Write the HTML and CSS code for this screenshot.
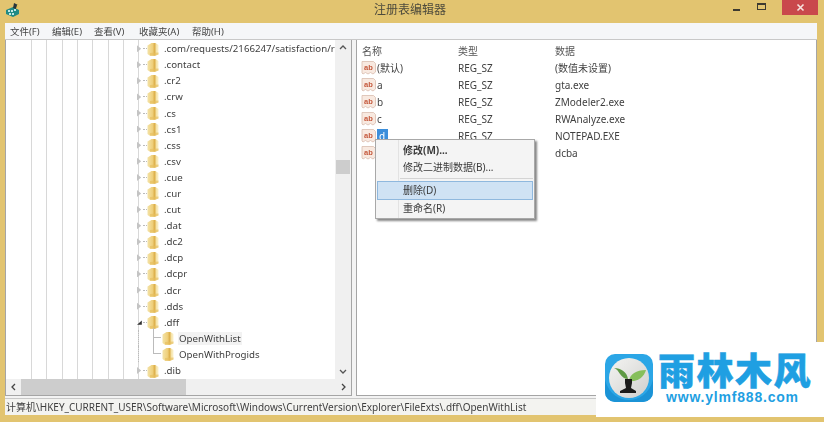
FILE: index.html
```html
<!DOCTYPE html>
<html lang="zh">
<head>
<meta charset="utf-8">
<title>注册表编辑器</title>
<link rel="stylesheet" href="styles.css">
</head>
<body>
<svg class="defs" width="0" height="0" aria-hidden="true">
  <defs>
    <linearGradient id="fold" x1="0" y1="0" x2="1" y2="0">
      <stop offset="0" stop-color="#f3e2a6"/>
      <stop offset=".45" stop-color="#efd07c"/>
      <stop offset=".66" stop-color="#dcae48"/>
      <stop offset=".8" stop-color="#f5e3a8"/>
      <stop offset="1" stop-color="#faf1d0"/>
    </linearGradient>
    <symbol id="folder" viewBox="0 0 12 14">
      <path d="M.5 3.500 4.500 1h4L11.500 3v9.500L8 13.700H3L.5 12z" fill="url(#fold)"/>
      <path d="M3 13.700h5l3.500-1.200V10.500L3 11z" fill="#e6bf5e" opacity=".65"/>
    </symbol>
    <symbol id="sz" viewBox="0 0 15 15">
      <path d="M1 1.500h11.500l2 2V12l-2.500 2-2.500-1.500-2.500 1.500-2.500-1.500L2 14l-1-1z" fill="#f8e9e0" stroke="#d9bcae" stroke-width=".8"/>
      <text x="7.500" y="9.500" text-anchor="middle" class="ab">ab</text>
    </symbol>
  </defs>
</svg>
<div class="window">
  <header class="titlebar">
    <svg class="appicon" width="16" height="16" viewBox="0 0 16 16">
      <path d="M1 8 8 5l6 3v4l-6 3-7-3z" fill="#1f8a86"/>
      <path d="M3 8h2v2H3zm3 0h2v2H6zm3-1h2v2H9zM4 11h2v2H4zm3 0h2v2H7z" fill="#bfe7e4"/>
      <path d="M9 1l4 2-2 4-3-1z" fill="#26343a"/>
      <path d="M12 3l2-1-1 4-2 1z" fill="#e3c25a"/>
    </svg>
    <div class="title">注册表编辑器</div>
    <div class="controls">
      <span class="min"></span>
      <span class="max"></span>
      <span class="close"><svg width="9" height="9" viewBox="0 0 9 9"><path d="M1.500 1.500l6 6M7.500 1.500l-6 6" stroke="#f6e4e0" stroke-width="1.600" fill="none"/></svg></span>
    </div>
  </header>
  <nav class="menubar">
    <span>文件(F)</span><span>编辑(E)</span><span>查看(V)</span><span>收藏夹(A)</span><span>帮助(H)</span>
  </nav>
  <main class="panes">
    <section class="left">
      <div class="treewrap">
        <div class="tree">
          <div class="row"><i class="tw"></i><i class="dash"></i><svg class="fd"><use href="#folder"/></svg><span>.com/requests/2166247/satisfaction/r</span></div>
          <div class="row"><i class="tw"></i><i class="dash"></i><svg class="fd"><use href="#folder"/></svg><span>.contact</span></div>
          <div class="row"><i class="tw"></i><i class="dash"></i><svg class="fd"><use href="#folder"/></svg><span>.cr2</span></div>
          <div class="row"><i class="tw"></i><i class="dash"></i><svg class="fd"><use href="#folder"/></svg><span>.crw</span></div>
          <div class="row"><i class="tw"></i><i class="dash"></i><svg class="fd"><use href="#folder"/></svg><span>.cs</span></div>
          <div class="row"><i class="tw"></i><i class="dash"></i><svg class="fd"><use href="#folder"/></svg><span>.cs1</span></div>
          <div class="row"><i class="tw"></i><i class="dash"></i><svg class="fd"><use href="#folder"/></svg><span>.css</span></div>
          <div class="row"><i class="tw"></i><i class="dash"></i><svg class="fd"><use href="#folder"/></svg><span>.csv</span></div>
          <div class="row"><i class="tw"></i><i class="dash"></i><svg class="fd"><use href="#folder"/></svg><span>.cue</span></div>
          <div class="row"><i class="tw"></i><i class="dash"></i><svg class="fd"><use href="#folder"/></svg><span>.cur</span></div>
          <div class="row"><i class="tw"></i><i class="dash"></i><svg class="fd"><use href="#folder"/></svg><span>.cut</span></div>
          <div class="row"><i class="tw"></i><i class="dash"></i><svg class="fd"><use href="#folder"/></svg><span>.dat</span></div>
          <div class="row"><i class="tw"></i><i class="dash"></i><svg class="fd"><use href="#folder"/></svg><span>.dc2</span></div>
          <div class="row"><i class="tw"></i><i class="dash"></i><svg class="fd"><use href="#folder"/></svg><span>.dcp</span></div>
          <div class="row"><i class="tw"></i><i class="dash"></i><svg class="fd"><use href="#folder"/></svg><span>.dcpr</span></div>
          <div class="row"><i class="tw"></i><i class="dash"></i><svg class="fd"><use href="#folder"/></svg><span>.dcr</span></div>
          <div class="row"><i class="tw"></i><i class="dash"></i><svg class="fd"><use href="#folder"/></svg><span>.dds</span></div>
          <div class="row"><i class="tw open"></i><i class="dash"></i><svg class="fd"><use href="#folder"/></svg><span>.dff</span></div>
          <div class="row child"><i class="elbow first"></i><svg class="fd"><use href="#folder"/></svg><span class="sel">OpenWithList</span></div>
          <div class="row child"><i class="elbow"></i><svg class="fd"><use href="#folder"/></svg><span>OpenWithProgids</span></div>
          <div class="row"><i class="tw"></i><i class="dash"></i><svg class="fd"><use href="#folder"/></svg><span>.dib</span></div>
        </div>
        <div class="vscroll">
          <svg class="arrow" width="16" height="16" viewBox="0 0 16 16"><path d="M5 9l3-3 3 3" fill="none" stroke="#555" stroke-width="1.300"/></svg>
          <div class="vtrack"><div class="vthumb"></div></div>
          <svg class="arrow" width="16" height="16" viewBox="0 0 16 16"><path d="M5 7l3 3 3-3" fill="none" stroke="#555" stroke-width="1.300"/></svg>
        </div>
      </div>
      <div class="hscroll">
        <svg class="arrow" width="15" height="16" viewBox="0 0 15 16"><path d="M9 5L6 8l3 3" fill="none" stroke="#444" stroke-width="1.300"/></svg>
        <div class="htrack"><div class="hthumb"></div></div>
        <svg class="arrow" width="15" height="16" viewBox="0 0 15 16"><path d="M6 5l3 3-3 3" fill="none" stroke="#444" stroke-width="1.300"/></svg>
      </div>
    </section>
    <section class="right">
      <div class="headrow"><span class="c1">名称</span><span class="c2">类型</span><span class="c3">数据</span></div>
      <div class="vrow"><span class="c1"><svg class="sz"><use href="#sz"/></svg>(默认)</span><span class="c2">REG_SZ</span><span class="c3">(数值未设置)</span></div>
      <div class="vrow"><span class="c1"><svg class="sz"><use href="#sz"/></svg>a</span><span class="c2">REG_SZ</span><span class="c3">gta.exe</span></div>
      <div class="vrow"><span class="c1"><svg class="sz"><use href="#sz"/></svg>b</span><span class="c2">REG_SZ</span><span class="c3">ZModeler2.exe</span></div>
      <div class="vrow"><span class="c1"><svg class="sz"><use href="#sz"/></svg>c</span><span class="c2">REG_SZ</span><span class="c3">RWAnalyze.exe</span></div>
      <div class="vrow"><span class="c1"><svg class="sz"><use href="#sz"/></svg><b class="picked">d</b></span><span class="c2">REG_SZ</span><span class="c3">NOTEPAD.EXE</span></div>
      <div class="vrow"><span class="c1"><svg class="sz"><use href="#sz"/></svg>e</span><span class="c2">REG_SZ</span><span class="c3">dcba</span></div>
    </section>
  </main>
  <footer class="status">计算机\HKEY_CURRENT_USER\Software\Microsoft\Windows\CurrentVersion\Explorer\FileExts\.dff\OpenWithList</footer>
</div>
<div class="menu">
  <div class="item strong">修改(M)...</div>
  <div class="item">修改二进制数据(B)...</div>
  <div class="sep"></div>
  <div class="item hover">删除(D)</div>
  <div class="item">重命名(R)</div>
</div>
<div class="logo">
  <svg class="logomark" width="48" height="48" viewBox="0 0 48 48">
    <defs>
      <linearGradient id="disc" x1="0" y1="0" x2="1" y2="1">
        <stop offset="0" stop-color="#f4f4f2"/>
        <stop offset="1" stop-color="#cfcfcd"/>
      </linearGradient>
    </defs>
    <rect width="48" height="48" rx="10" fill="#2ba6e6"/>
    <path d="M0 26c4 14 14 20 24 20s20-6 24-20v12a10 10 0 0 1-10 10H10A10 10 0 0 1 0 38z" fill="#1b93d6"/>
    <circle cx="24" cy="24" r="20" fill="url(#disc)"/>
    <path d="M23 25C22 18 16 14 9 14c3 1 4 3 6 6 2 3 5 5 8 5z" fill="#5f9a45"/>
    <path d="M24 27c1-7 7-11 17-11-2 7-8 12-17 11z" fill="#86bf5b"/>
    <path d="M20 25h7v4l-1 5 5 3v2H15v-2l6-3-1-5z" fill="#1b1b1a"/>
  </svg>
  <div class="brand">
    <div class="cn">雨林木风</div>
    <div class="url">www.ylmf888.com</div>
  </div>
</div>
</body>
</html>
```

FILE: styles.css
```css
* { box-sizing: border-box; }
html, body { margin: 0; height: 100%; overflow: hidden; }
body { width: 824px; height: 422px; background: #d9bc6c; font-family: "Noto Sans", "Noto Sans CJK SC", sans-serif; color: #333; position: relative; }
.defs { display: block; height: 0; }
.ab { font: bold 7.5px "Liberation Sans", sans-serif; fill: #c4583c; }
.window { height: 422px; display: flex; flex-direction: column; background: #e2c470; padding: 0 7px 7px 5px; filter: blur(.45px); }
.titlebar { height: 23px; flex: none; display: flex; align-items: center; position: relative; margin: 0 -7px 0 -5px; padding-left: 5px; }
.appicon { flex: none; margin-top: -3px; }
.title { position: absolute; left: 0; right: 4px; top: 1px; text-align: center; font-size: 12px; line-height: 18px; color: #4d4a3c; }
.controls { margin-left: auto; display: flex; align-items: flex-start; align-self: flex-start; margin-right: 6px; }
.min { width: 7px; height: 2px; background: #3d3a30; margin: 9px 17px 0 0; }
.max { width: 9px; height: 7px; border: 1px solid #3d3a30; border-top-width: 2px; margin: 3px 16px 0 0; }
.close { width: 36px; height: 15px; background: #c9484c; display: flex; align-items: center; justify-content: center; }
.menubar { height: 16px; flex: none; background: #f5f6f8; display: flex; align-items: center; font-size: 9.5px; color: #444; padding-left: 5px; gap: 11px; }
.menubar span { width: 31px; white-space: nowrap; }
.menubar span:nth-child(3) { width: 34px; }
.menubar span:nth-child(4) { width: 42px; }
.panes { flex: 1; min-height: 0; display: flex; gap: 4px; background: #f3f3f3; padding-bottom: 2px; border-top: 1px solid #c8c8c8; }
.left { width: 347px; flex: none; border: 1px solid #a5a5a5; border-top: 0; background: #fff; display: flex; flex-direction: column; }
.treewrap { flex: 1; min-height: 0; display: flex; }
.tree { flex: 1; min-width: 0; overflow: hidden; padding: .6px 0 0 131px; white-space: nowrap; font-size: 9.7px; color: #3f3f3f;
  background-image: repeating-linear-gradient(90deg, #d8d8d8 0 1px, transparent 1px 15.3px); background-position: 25px 0; background-size: 108px 100%; background-repeat: no-repeat; }
.row { height: 16.1px; display: flex; align-items: center; }
.tw { width: 6px; height: 7px; flex: none; background: #c4c4c4; clip-path: polygon(0 0, 70% 50%, 0 100%); }
.tw.open { background: #333; clip-path: polygon(80% 25%, 80% 85%, 0 85%); }
.dash { width: 4px; height: 0; border-top: 1px dotted #bbb; flex: none; }
.fd { width: 12px; height: 14px; flex: none; margin-right: 5px; }
.row.child { margin-left: 1px; padding-left: 23px; position: relative; border-left: 1px dotted #bbb; }
.elbow { position: absolute; left: 14px; top: -8px; width: 8px; height: 16px; border-left: 1px solid #bbb; border-bottom: 1px solid #bbb; }
.elbow.first { top: -2px; height: 10px; }
.child .fd { position: relative; }
.sel { background: #f2f2f2; padding: 0 1px; margin-left: -1px; }
.vscroll { width: 16px; flex: none; background: #f0f0f0; display: flex; flex-direction: column; }
.arrow { flex: none; display: block; }
.vtrack { flex: 1; width: 100%; padding-top: 104px; }
.vthumb { height: 14px; background: #cdcdcd; margin: 0 1px; }
.hscroll { height: 16px; flex: none; display: flex; align-items: center; background: #f0f0f0; }
.htrack { flex: 1; height: 100%; }
.hthumb { width: 165px; height: 100%; background: #cdcdcd; }
.right { flex: 1; min-width: 0; background: #fff; border: 1px solid #a5a5a5; border-top: 0; font-size: 10px; color: #3f3f3f; padding-top: 1px; }
.headrow { height: 18px; display: flex; align-items: center; color: #555; }
.vrow { height: 17px; display: flex; align-items: center; }
.c1 { width: 101px; padding-left: 4px; display: flex; align-items: center; flex: none; }
.headrow .c1 { padding-left: 5px; }
.c2 { width: 97px; flex: none; }
.c3 { flex: 1; }
.sz { width: 15px; height: 15px; flex: none; margin-right: 1px; }
.picked { font-weight: normal; background: #3b8edb; color: #fff; padding: 0 3px 0 2px; }
.status { height: 17px; flex: none; background: #f3f3f0; font-size: 10px; line-height: 17px; color: #3f3f3f; padding-left: 1px; white-space: nowrap; border-top: 1px solid #c8c8c8; }
.menu { position: absolute; left: 375px; top: 139px; width: 160px; height: 80px; background: #f4f4f4; border: 1px solid #a8a8a8; box-shadow: 2px 2px 2px #888; padding: 2px 1px; font-size: 10px; color: #3a3a3a; filter: blur(.3px);
  background-image: linear-gradient(90deg, transparent 0 22px, #e2e2e2 22px 23px, transparent 23px); }
.item { height: 17px; line-height: 17px; padding-left: 26px; }
.item.strong { font-weight: bold; }
.sep { height: 1px; margin: 2px 0 3px 23px; background: #d4d4d4; }
.item.hover { background: #cfe2f4; outline: 1px solid #8fb8de; margin: 0 1px 1px; padding-left: 25px; }
.logo { position: absolute; left: 596px; top: 342px; width: 228px; height: 75px; background: #fff; display: flex; padding: 12px 0 0 9px; gap: 5px; }
.logomark { flex: none; }
.brand { color: #1f9fe2; }
.cn { font: 900 37px/37px "Noto Sans CJK SC", sans-serif; letter-spacing: 1.5px; margin-top: -3px; white-space: nowrap; height: 37px; -webkit-text-stroke: .5px #1f9fe2; }
.url { font: bold 14px/12px "Liberation Sans", sans-serif; letter-spacing: .8px; padding-left: 8px; white-space: nowrap; margin-top: 3px; }
```
